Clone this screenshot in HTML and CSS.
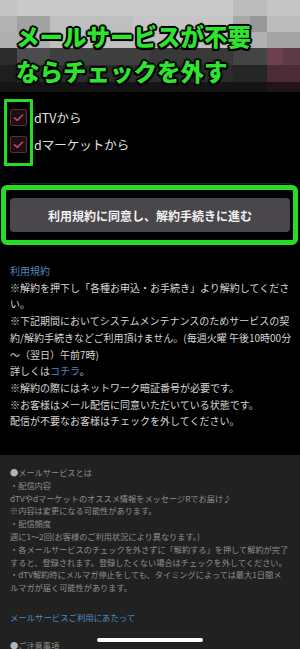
FILE: index.html
```html
<!DOCTYPE html>
<html>
<head>
    <meta charset="utf-8">
    <title>解約手続き</title>
    <link rel="stylesheet" href="styles.css">
</head>

<body>
    <div class="page">
        <!-- モザイク + 注釈 -->
        <header class="hero">
            <div class="mosaic">
                <div class="m-row r0"></div>
                <div class="m-row r1"></div>
                <div class="m-row r2"></div>
                <div class="m-row r3"></div>
                <div class="m-row r4"></div>
                <div class="m-row r5"></div>
            </div>
            <h1 class="callout">メールサービスが不要<br>ならチェックを外す</h1>
        </header>

        <section class="opts">
            <div class="opts-mark"></div>
            <label class="opt">
                <span class="box"><svg width="17" height="17" viewBox="0 0 17 17"><path d="M4.5 8.8 L7.3 11.4 L12.6 6" fill="none" stroke="#c93f6c" stroke-width="1.6" stroke-linecap="round" stroke-linejoin="round"/></svg></span>
                dTVから
            </label>
            <label class="opt">
                <span class="box"><svg width="17" height="17" viewBox="0 0 17 17"><path d="M4.5 8.8 L7.3 11.4 L12.6 6" fill="none" stroke="#c93f6c" stroke-width="1.6" stroke-linecap="round" stroke-linejoin="round"/></svg></span>
                dマーケットから
            </label>
        </section>

        <div class="sep"></div>

        <div class="btn-mark">
            <button class="btn-next">利用規約に同意し、解約手続きに進む</button>
        </div>

        <section class="terms">
            <a class="link">利用規約</a><br>
            ※解約を押下し「各種お申込・お手続き」より解約してくださ<br>
            い。<br>
            ※下記期間においてシステムメンテナンスのためサービスの契<br>
            約/解約手続きなどご利用頂けません。(毎週火曜 午後10時00分<br>
            〜（翌日）午前7時)<br>
            詳しくは<a class="link">コチラ</a>。<br>
            ※解約の際にはネットワーク暗証番号が必要です。<br>
            ※お客様はメール配信に同意いただいている状態です。<br>
            配信が不要なお客様はチェックを外してください。
        </section>

        <section class="notes">
            <p>
                <span class="dot">●</span>メールサービスとは<br>
                ・配信内容<br>
                dTVやdマーケットのオススメ情報をメッセージRでお届け♪<br>
                ※内容は変更になる可能性があります。<br>
                ・配信頻度<br>
                週に1〜2回(お客様のご利用状況により異なります。)<br>
                ・各メールサービスのチェックを外さずに「解約する」を押して解約が完了<br>
                すると、登録されます。登録したくない場合はチェックを外してください。<br>
                ・dTV解約時にメルマガ停止をしても、タイミングによっては最大1日間メ<br>
                ルマガが届く可能性があります。
            </p>
            <p class="notes-link"><a class="link">メールサービスご利用にあたって</a></p>
            <p class="notes-next"><span class="dot">●</span>ご注意事項</p>
        </section>

        <div class="home-bar"></div>
    </div>
</body>
</html>
```

FILE: styles.css
```css
html, body {
    margin: 0;
    padding: 0;
    background: #000;
}

body {
    font-family: "Noto Sans CJK JP", "Noto Sans", sans-serif;
    color: #d8d8d8;
}

.page {
    position: relative;
    width: 300px;
    height: 649px;
    overflow: hidden;
    background: #000;
}

/* モザイク部分 */
.hero {
    position: relative;
    height: 95px;
}

.m-row { height: 16px; }
.m-row.r3, .m-row.r4 { height: 17px; }
.m-row.r5 { height: 10px; }

.r0 {
    background: linear-gradient(to right,
        #c3c3c3 0 17px, #c9c9c9 17px 233px, #bcbcbc 233px 267px, #c6c6c6 267px);
}
.r1 {
    background: linear-gradient(to right,
        #b3b3b3 0 17px, #a2a2a2 17px 50px, #bfbfbf 50px 133px, #c6c6c6 133px 233px,
        #a9a9a9 233px 250px, #989898 250px 267px, #bcbcbc 267px);
}
.r2 {
    background: linear-gradient(to right,
        #afafaf 0 50px, #c0c0c0 50px 233px, #b0b0b0 233px 267px, #a4a4a4 267px);
}
.r3 {
    background: linear-gradient(to right,
        #2b2b2b 0 17px, #4c4c4c 17px 50px, #3f3f3f 50px 150px, #383838 150px 233px,
        #444 233px 267px, #6e3f4d 267px 283px, #5c3a45 283px);
}
.r4 {
    background: linear-gradient(to right,
        #1e1e1e 0 17px, #2c2c2c 17px 233px, #262626 233px 267px, #4b2b35 267px);
}
.r5 {
    background: linear-gradient(to right, #141414 0 267px, #201418 267px);
}

.callout {
    position: absolute;
    left: 16px;
    top: 19px;
    margin: 0;
    font-size: 23.5px;
    line-height: 35px;
    font-weight: 900;
    color: #2fe42f;
    text-shadow:
        2px 0 0 #000, -2px 0 0 #000, 0 2px 0 #000, 0 -2px 0 #000,
        1.5px 1.5px 0 #000, -1.5px 1.5px 0 #000, 1.5px -1.5px 0 #000, -1.5px -1.5px 0 #000,
        0 0 3px #000;
}

/* チェックボックス */
.opts {
    position: relative;
    padding: 8.5px 0 25.5px;
}

.opts-mark {
    position: absolute;
    left: 4px;
    top: 4px;
    width: 23px;
    height: 61px;
    border: 3px solid #27dc27;
    border-radius: 1px;
}

.opt {
    display: flex;
    align-items: center;
    gap: 7px;
    height: 27px;
    padding-left: 10px;
    font-size: 12.5px;
    color: #e2e2e2;
}

.box {
    display: block;
    width: 15px;
    height: 15px;
    border: 1px solid #5c2c3b;
    border-radius: 2px;
    background: #1a0f13;
}

.box svg {
    display: block;
    margin: -1px;
}

.sep {
    height: 1px;
    margin: 0 10px;
    background: #262626;
}

/* ボタン */
.btn-mark {
    margin: 1px 2px 0 1px;
    padding: 8px 3px 8px 4px;
    border: 5px solid #27dc27;
    border-radius: 6px;
    background: #000;
}

.btn-next {
    display: block;
    width: 100%;
    height: 34px;
    border: none;
    border-radius: 4px;
    background: #4a474c;
    color: #f2f2f2;
    font-family: inherit;
    font-size: 12px;
    font-weight: bold;
}

/* 規約テキスト */
.terms {
    margin-top: 18px;
    padding: 0 10px;
    font-size: 10px;
    line-height: 16.7px;
    color: #d6d6d6;
    white-space: nowrap;
}

.link {
    color: #4f86bd;
}

.notes .link {
    color: #4a8ec4;
}

/* メールサービス説明 */
.notes {
    margin-top: 25px;
    height: 200px;
    padding: 11px 10px 0;
    background: #212121;
    font-size: 8.2px;
    line-height: 12.8px;
    color: #8e8e8e;
    white-space: nowrap;
}

.notes p {
    margin: 0;
}

.notes .notes-link {
    margin-top: 16.5px;
    font-size: 8.4px;
}

.notes .notes-next {
    margin-top: 16.2px;
}

.dot {
    color: #b5b5b5;
}

.home-bar {
    position: absolute;
    left: 97px;
    top: 638px;
    width: 106px;
    height: 4px;
    border-radius: 2px;
    background: #fff;
}
```
